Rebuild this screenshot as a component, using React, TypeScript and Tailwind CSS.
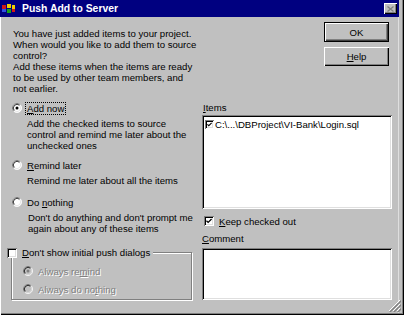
import React from "react";

const sunken =
  "shadow-[inset_1px_1px_0_#808080,inset_-1px_-1px_0_#ffffff,inset_2px_2px_0_#000000,inset_-2px_-2px_0_#dfdfdf]";

const Radio = ({ checked = false, disabled = false }: { checked?: boolean; disabled?: boolean }) => (
  <svg width="10" height="10" viewBox="0 0 12 12" className="shrink-0">
    <circle cx="6" cy="6" r="5.5" fill={disabled ? "#c0c0c0" : "#ffffff"} />
    <path d="M9.89 2.11 A5.5 5.5 0 0 0 2.11 9.89" stroke="#808080" strokeWidth="1" fill="none" />
    <path d="M2.11 9.89 A5.5 5.5 0 0 0 9.89 2.11" stroke="#ffffff" strokeWidth="1" fill="none" />
    <path d="M9.18 2.82 A4.5 4.5 0 0 0 2.82 9.18" stroke="#000000" strokeWidth="1" fill="none" />
    <path d="M2.82 9.18 A4.5 4.5 0 0 0 9.18 2.82" stroke="#dfdfdf" strokeWidth="1" fill="none" />
    {checked && <circle cx="6" cy="6" r="1.8" fill={disabled ? "#808080" : "#000000"} />}
  </svg>
);

const Check = ({ checked = false, size = 10 }: { checked?: boolean; size?: number }) => (
  <div
    className={`shrink-0 bg-white flex items-center justify-center ${sunken}`}
    style={{ width: size, height: size }}
  >
    {checked && (
      <svg width={size - 4} height={size - 4} viewBox="0 0 7 7">
        <path d="M0.5 3.2 L2.5 5.2 L6.5 1.2" stroke="#000" strokeWidth="1.5" fill="none" />
      </svg>
    )}
  </div>
);

const U = ({ children }: { children: React.ReactNode }) => <span className="underline underline-offset-1">{children}</span>;

const dis = "text-[#808080] [text-shadow:1px_1px_0_#ffffff]";

export default function App() {
  return (
    <div
      className="w-[404px] h-[315px] bg-[#c0c0c0] text-black text-[9.6px] leading-[11px] relative overflow-hidden flex flex-col shadow-[inset_1px_0_0_#ffffff,inset_-1px_-1px_0_#000000,inset_-2px_-2px_0_#808080,inset_-5px_0_0_#c0c0c0,inset_-6px_0_0_#dfdfdf]"
      style={{ fontFamily: '"Liberation Sans", Arial, sans-serif' }}
    >
      <div className="h-[17px] w-[399px] bg-[#000080] flex items-center pl-[2px] pr-[2px]">
        <svg width="14" height="11" viewBox="0 0 14 11" className="shrink-0">
          <rect x="0" y="2" width="4" height="4" fill="#d01818" />
          <rect x="0" y="6" width="4" height="3" fill="#3050e0" />
          <rect x="5" y="1" width="4" height="4" fill="#f0d000" />
          <rect x="5" y="6" width="4" height="4" fill="#18a018" />
          <rect x="10" y="2" width="3" height="4" fill="#f0d000" />
          <rect x="10" y="6" width="3" height="3" fill="#d01818" />
        </svg>
        <span className="ml-[6px] text-white font-bold text-[10.4px] leading-[12px]">Push Add to Server</span>
        <div className="ml-auto w-[13px] h-[11px] bg-[#c0c0c0] flex items-center justify-center shadow-[inset_1px_1px_0_#ffffff,inset_-1px_-1px_0_#000000,inset_-2px_-2px_0_#808080]">
          <svg width="7" height="6" viewBox="0 0 7 6">
            <path d="M0.5 0.5 L6.5 5.5 M6.5 0.5 L0.5 5.5" stroke="#808080" strokeWidth="1.3" fill="none" />
          </svg>
        </div>
      </div>

      <div className="flex flex-1 pl-[12px] whitespace-nowrap">
        <div className="w-[181px] flex flex-col">
          <p className="mt-[10.5px] pl-[1px]">
            You have just added items to your project.
            <br />
            When would you like to add them to source
            <br />
            control?
            <br />
            Add these items when the items are ready
            <br />
            to be used by other team members, and
            <br />
            not earlier.
          </p>

          <div className="mt-[9px] h-[11px] flex items-center">
            <Radio checked />
            <span className="ml-[4px] outline-1 outline-dotted outline-black px-[1px]">
              <U>A</U>dd now
            </span>
          </div>
          <p className="mt-[4.5px] pl-[15px]">
            Add the checked items to source
            <br />
            control and remind me later about the
            <br />
            unchecked ones
          </p>

          <div className="mt-[8.5px] h-[11px] flex items-center">
            <Radio />
            <span className="ml-[5px]">
              <U>R</U>emind later
            </span>
          </div>
          <p className="mt-[4px] pl-[15px]">Remind me later about all the items</p>

          <div className="mt-[11px] h-[11px] flex items-center">
            <Radio />
            <span className="ml-[5px]">
              Do <U>n</U>othing
            </span>
          </div>
          <p className="mt-[4px] pl-[16px]">
            Don't do anything and don't prompt me
            <br />
            again about any of these items
          </p>

          <div className="relative mt-[18.5px] -ml-[1px] w-[181px] h-[48px] border border-[#808080] shadow-[inset_1px_1px_0_#ffffff,1px_1px_0_#ffffff] pl-[11px] pt-[12.5px]">
            <div className="absolute -top-[6px] -left-[5px] flex items-center bg-[#c0c0c0] pr-[3px]">
              <Check />
              <span className="ml-[5px]">
                <U>D</U>on't show initial push dialogs
              </span>
            </div>
            <div className="h-[11px] flex items-center">
              <Radio checked disabled />
              <span className={`ml-[5px] ${dis}`}>
                Always re<U>m</U>ind
              </span>
            </div>
            <div className="mt-[7px] h-[11px] flex items-center">
              <Radio disabled />
              <span className={`ml-[5px] ${dis}`}>
                Always do no<U>t</U>hing
              </span>
            </div>
          </div>
        </div>

        <div className="ml-[9px] w-[190px] flex flex-col">
          <div className="self-end mr-[3px] flex flex-col">
            <button className="mt-[5px] w-[65px] h-[20px] bg-[#c0c0c0] border border-black flex items-center justify-center shadow-[inset_1px_1px_0_#ffffff,inset_-1px_-1px_0_#404040,inset_-2px_-2px_0_#808080]">
              OK
            </button>
            <button className="mt-[5px] w-[65px] h-[19px] bg-[#c0c0c0] flex items-center justify-center shadow-[inset_1px_1px_0_#ffffff,inset_-1px_-1px_0_#000000,inset_-2px_-2px_0_#808080]">
              <U>H</U>elp
            </button>
          </div>

          <div className="mt-[35.5px] h-[11px] pl-[1px]">
            <U>I</U>tems
          </div>
          <div className={`mt-[2.5px] h-[94px] bg-white ${sunken} pt-[4px] pl-[3px]`}>
            <div className="h-[11px] flex items-center">
              <Check checked size={9} />
              <span className="ml-[1px]">C:\...\DBProject\VI-Bank\Login.sql</span>
            </div>
          </div>

          <div className="mt-[6.5px] h-[11px] flex items-center pl-[2px]">
            <Check checked />
            <span className="ml-[5px]">
              <U>K</U>eep checked out
            </span>
          </div>
          <div className="mt-[6px] h-[11px]">
            <U>C</U>omment
          </div>
          <div className={`mt-[4.5px] h-[52px] bg-white ${sunken}`} />
        </div>
      </div>

      <svg width="13" height="13" viewBox="0 0 13 13" className="absolute right-[3px] bottom-[3px]">
        <path d="M12 1 L1 12 M12 5 L5 12 M12 9 L9 12" stroke="#ffffff" strokeWidth="1" />
        <path d="M13 1 L1 13 M13 5 L5 13 M13 9 L9 13" stroke="#808080" strokeWidth="1.4" transform="translate(0.5 0.5)" />
      </svg>
    </div>
  );
}
